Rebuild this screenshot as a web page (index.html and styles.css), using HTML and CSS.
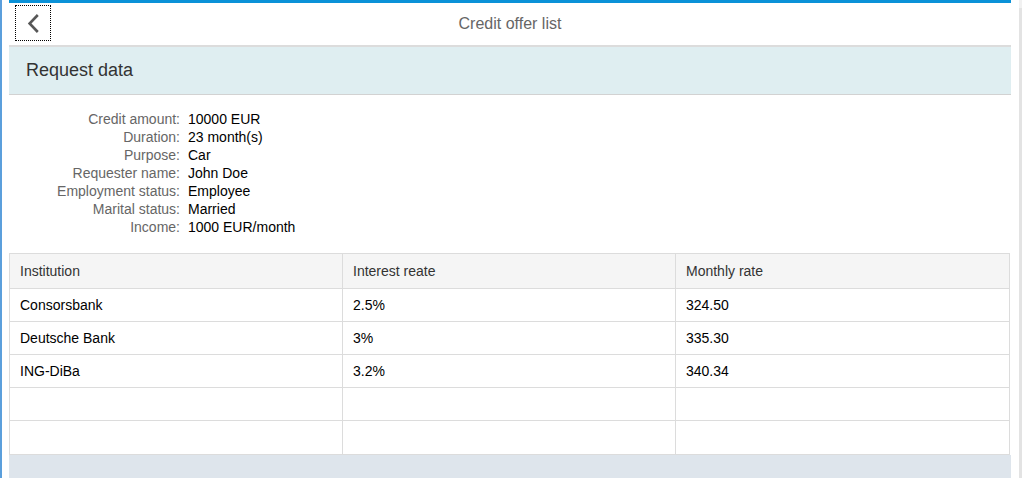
FILE: index.html
```html
<!DOCTYPE html>
<html lang="en">
<head>
<meta charset="utf-8">
<title>Credit offer list</title>
<link rel="stylesheet" href="styles.css">
</head>
<body>
<div class="page">
  <div class="edge"></div>
  <div class="main">
    <div class="topbar"></div>
    <header class="header">
      <button class="back" aria-label="Back">
        <svg width="13" height="19" viewBox="0 0 13 19"><path d="M10.8 1 L2.6 9.5 L10.8 18" fill="none" stroke="#575757" stroke-width="2.6"/></svg>
      </button>
      <h1 class="title">Credit offer list</h1>
      <div class="spacer"></div>
    </header>
    <div class="panel-head">Request data</div>
    <dl class="form">
      <dt>Credit amount:</dt><dd>10000 EUR</dd>
      <dt>Duration:</dt><dd>23 month(s)</dd>
      <dt>Purpose:</dt><dd>Car</dd>
      <dt>Requester name:</dt><dd>John Doe</dd>
      <dt>Employment status:</dt><dd>Employee</dd>
      <dt>Marital status:</dt><dd>Married</dd>
      <dt>Income:</dt><dd>1000 EUR/month</dd>
    </dl>
    <table class="offers">
      <colgroup>
        <col class="c1"><col class="c2"><col class="c3">
      </colgroup>
      <thead>
        <tr><th>Institution</th><th>Interest reate</th><th>Monthly rate</th></tr>
      </thead>
      <tbody>
        <tr><td>Consorsbank</td><td>2.5%</td><td>324.50</td></tr>
        <tr><td>Deutsche Bank</td><td>3%</td><td>335.30</td></tr>
        <tr><td>ING-DiBa</td><td>3.2%</td><td>340.34</td></tr>
        <tr><td></td><td></td><td></td></tr>
        <tr class="last"><td></td><td></td><td></td></tr>
      </tbody>
    </table>
    <div class="footer"></div>
  </div>
  <div class="scroll"><div class="scroll-top"></div></div>
</div>
</body>
</html>
```
FILE: styles.css
```css
html, body {
  margin: 0;
  padding: 0;
  background: #fff;
  overflow: hidden;
}
body {
  font-family: "Liberation Sans", Arial, sans-serif;
  font-size: 14px;
  color: #000;
}
.page {
  display: flex;
  width: 1022px;
  height: 478px;
  overflow: hidden;
}
.edge {
  width: 2px;
  background: #5b9fdc;
  flex: none;
}
.main {
  width: 1002px;
  margin-left: 7px;
  flex: none;
  display: flex;
  flex-direction: column;
}
.main > * {
  flex: none;
}
.topbar {
  height: 3px;
  background: #0a92d8;
}
.header {
  height: 42px;
  border-bottom: 2px solid #dcdcdc;
  display: flex;
  align-items: center;
}
.back {
  width: 36px;
  height: 36px;
  margin: 2px 0 0 6px;
  padding: 0;
  border: 1px dotted #000;
  background: transparent;
  display: flex;
  align-items: center;
  justify-content: center;
  align-self: flex-start;
}
.title {
  flex: 1;
  margin: 0;
  text-align: center;
  font-size: 16px;
  font-weight: normal;
  color: #666;
}
.spacer {
  width: 42px;
}
.panel-head {
  height: 47px;
  background: #dfeef1;
  border-bottom: 1px solid #d2d2d2;
  display: flex;
  align-items: center;
  padding-left: 17px;
  font-size: 18px;
  color: #333;
}
.form {
  display: grid;
  grid-template-columns: 171px auto;
  column-gap: 8px;
  margin: 15px 0 17px;
  line-height: 18px;
}
.form dt {
  text-align: right;
  color: #666;
}
.form dd {
  margin: 0;
  color: #000;
}
.offers {
  width: 1001px;
  table-layout: fixed;
  border-collapse: collapse;
  border: 1px solid #dcdcdc;
}
.c1, .c2 {
  width: 333px;
}
.offers th, .offers td {
  border: 1px solid #dcdcdc;
  padding: 0 10px;
  text-align: left;
  font-weight: normal;
  height: 32px;
}
.offers th {
  height: 34px;
  background: #f5f5f5;
  color: #333;
}
.offers td {
  color: #000;
}
.offers .last td {
  height: 33px;
}
.footer {
  height: 40px;
  background: #dee5ec;
}
.scroll {
  width: 3px;
  margin-left: auto;
  background: #e3e3e3;
  flex: none;
}
.scroll-top {
  height: 8px;
  background: #f1f1f1;
}
```
